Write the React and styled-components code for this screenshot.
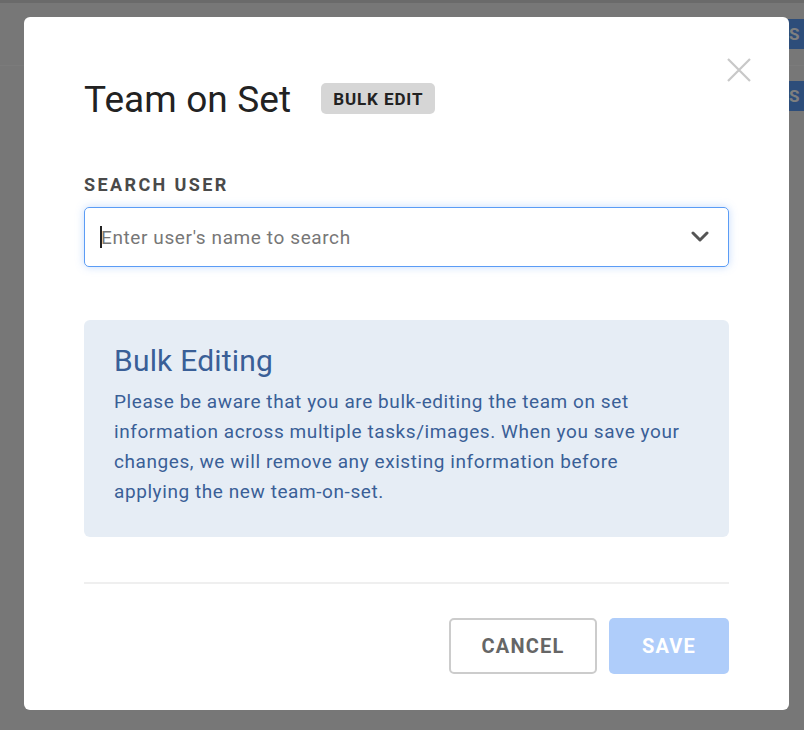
import React from "react";
import styled, { createGlobalStyle } from "styled-components";

const Global = createGlobalStyle`
  html, body { margin: 0; padding: 0; }
  body {
    width: 804px;
    height: 730px;
    overflow: hidden;
    font-family: Roboto, "Noto Sans", Arial, sans-serif;
    background: #eeeeee;
  }
`;

const Page = styled.div`
  position: relative;
  width: 804px;
  height: 730px;
  overflow: hidden;
  background: #eeeeee;
  display: flex;
  flex-direction: column;
`;

const TopStrip = styled.div`
  height: 3px;
  background: #d4d4d4;
`;

const PageRow = styled.div`
  height: ${(p) => p.$h}px;
  display: flex;
  align-items: ${(p) => p.$align || "center"};
  justify-content: flex-end;
  border-bottom: ${(p) => (p.$border ? "1px solid #f6f6f6" : "none")};
  box-sizing: border-box;
  padding-top: ${(p) => p.$pt || 0}px;
`;

const PageButton = styled.div`
  height: 30px;
  margin-right: -20px;
  padding: 0 24px 0 14px;
  background: #5a9bf4;
  color: #ffffff;
  font-weight: 700;
  font-size: 17px;
  display: flex;
  align-items: center;
  letter-spacing: 0.5px;
`;

const Overlay = styled.div`
  position: absolute;
  inset: 0;
  background: rgba(0, 0, 0, 0.5);
`;

const Modal = styled.div`
  position: absolute;
  left: 24px;
  top: 17px;
  width: 765px;
  height: 693px;
  box-sizing: border-box;
  background: #ffffff;
  border-radius: 6px;
  padding: 62px 60px 0 60px;
  display: flex;
  flex-direction: column;
`;

const CloseButton = styled.button`
  position: absolute;
  top: 40px;
  right: 37px;
  width: 26px;
  height: 26px;
  padding: 0;
  border: none;
  background: transparent;
  display: flex;
  align-items: center;
  justify-content: center;
  cursor: pointer;
`;

const Header = styled.div`
  display: flex;
  align-items: center;
  gap: 30px;
`;

const Title = styled.h1`
  margin: 0;
  font-size: 37px;
  font-weight: 400;
  color: #222222;
  line-height: 42px;
  letter-spacing: 0.1px;
`;

const Badge = styled.span`
  display: inline-flex;
  align-items: center;
  height: 31px;
  padding: 0 12px;
  border-radius: 5px;
  background: #d6d6d6;
  color: #222222;
  font-size: 17px;
  font-weight: 700;
  letter-spacing: 0.9px;
  margin-top: -3px;
`;

const Label = styled.label`
  display: block;
  margin-top: 53px;
  font-size: 18px;
  font-weight: 700;
  letter-spacing: 2.4px;
  color: #4a4a4a;
  line-height: 22px;
`;

const SelectBox = styled.div`
  margin-top: 11px;
  height: 60px;
  box-sizing: border-box;
  border: 1px solid #5b9cf5;
  border-radius: 5px;
  box-shadow: 0 0 8px rgba(91, 156, 245, 0.35);
  display: flex;
  align-items: center;
  padding: 0 19px 0 15px;
`;

const Input = styled.input`
  flex: 1;
  border: none;
  outline: none;
  font-family: Roboto, "Noto Sans", Arial, sans-serif;
  font-size: 19px;
  letter-spacing: 0.6px;
  color: #333;
  padding: 0;
  background: transparent;
  &::placeholder {
    color: #777777;
  }
`;

const Caret = styled.span`
  width: 2px;
  height: 22px;
  background: #222;
  margin-right: -1px;
`;

const InfoBox = styled.div`
  margin-top: 53px;
  background: #e6edf5;
  border-radius: 6px;
  padding: 23px 30px 20px 30px;
  height: 217px;
  box-sizing: border-box;
`;

const InfoTitle = styled.h2`
  margin: 0 0 8px 0;
  font-size: 30px;
  font-weight: 400;
  color: #3a5f97;
  line-height: 36px;
  letter-spacing: 0.2px;
`;

const InfoText = styled.p`
  margin: 0;
  font-size: 19px;
  line-height: 30px;
  color: #3a5f97;
  letter-spacing: 0.58px;
`;

const Divider = styled.hr`
  margin: 45px 0 0 0;
  border: none;
  height: 2px;
  background: #efefef;
`;

const Footer = styled.div`
  margin-top: 34px;
  display: flex;
  justify-content: flex-end;
  gap: 12px;
`;

const Button = styled.button`
  height: 56px;
  box-sizing: border-box;
  padding: 0;
  width: ${(p) => p.$w}px;
  border-radius: 5px;
  font-family: Roboto, "Noto Sans", Arial, sans-serif;
  font-size: 20px;
  font-weight: 700;
  letter-spacing: 1.2px;
  border: ${(p) => (p.$primary ? "none" : "2px solid #cccccc")};
  background: ${(p) => (p.$primary ? "#afcdfa" : "#ffffff")};
  color: ${(p) => (p.$primary ? "#ffffff" : "#666666")};
`;

export default function App() {
  return (
    <>
      <Global />
      <Page>
        <TopStrip />
        <PageRow $h={63} $border>
          <PageButton>DETAILS</PageButton>
        </PageRow>
        <PageRow $h={60} $align="flex-start" $pt={15}>
          <PageButton>TAGS</PageButton>
        </PageRow>
        <Overlay />
        <Modal>
          <CloseButton aria-label="Close">
            <svg width="24" height="24" viewBox="0 0 24 24">
              <path
                d="M1 1 L23 23 M23 1 L1 23"
                stroke="#c8c8c8"
                strokeWidth="2.2"
                fill="none"
              />
            </svg>
          </CloseButton>
          <Header>
            <Title>Team on Set</Title>
            <Badge>BULK EDIT</Badge>
          </Header>
          <Label>SEARCH USER</Label>
          <SelectBox>
            <Caret />
            <Input placeholder="Enter user's name to search" />
            <svg width="18" height="12" viewBox="0 0 18 12">
              <path
                d="M2 2 L9 9 L16 2"
                stroke="#555555"
                strokeWidth="3"
                fill="none"
                strokeLinecap="round"
                strokeLinejoin="round"
              />
            </svg>
          </SelectBox>
          <InfoBox>
            <InfoTitle>Bulk Editing</InfoTitle>
            <InfoText>
              Please be aware that you are bulk-editing the team on set
              information across multiple tasks/images. When you save your
              changes, we will remove any existing information before applying
              the new team-on-set.
            </InfoText>
          </InfoBox>
          <Divider />
          <Footer>
            <Button $w={148}>CANCEL</Button>
            <Button $w={120} $primary>
              SAVE
            </Button>
          </Footer>
        </Modal>
      </Page>
    </>
  );
}
